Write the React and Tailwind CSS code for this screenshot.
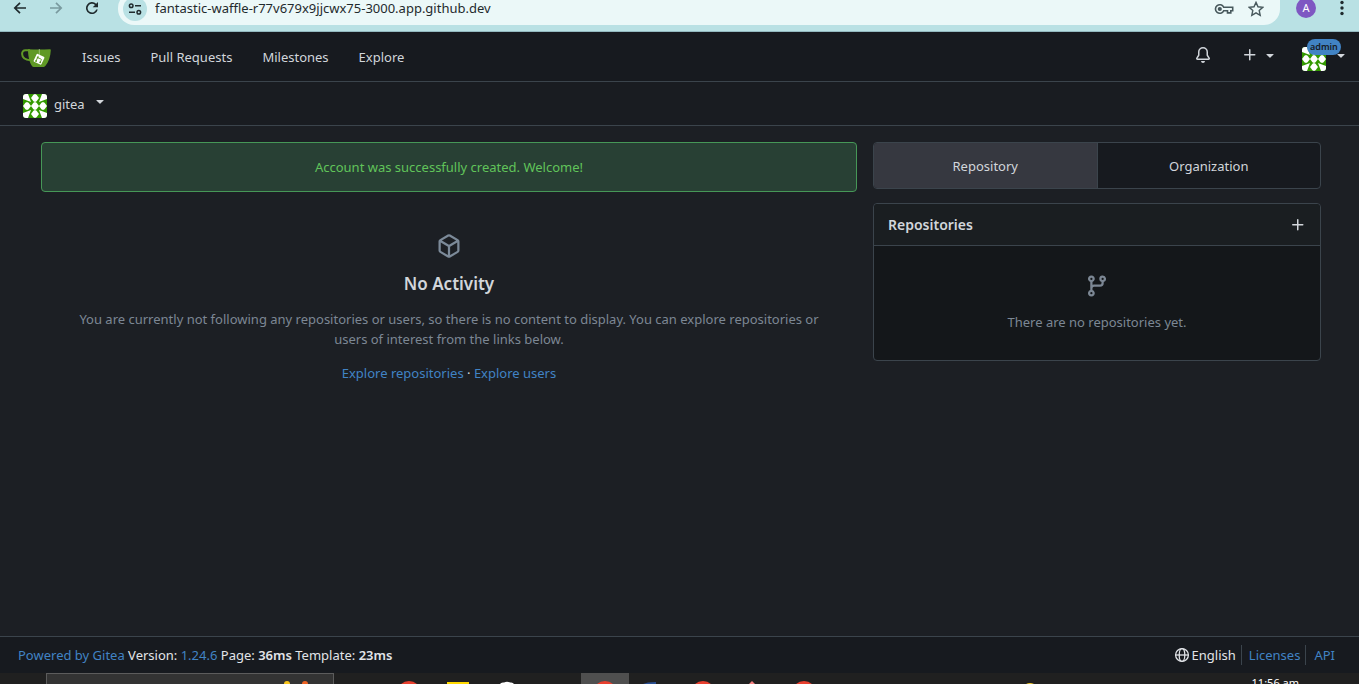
const paths = {
  plus: "M7.75 2a.75.75 0 0 1 .75.75V7h4.25a.75.75 0 0 1 0 1.5H8.5v4.25a.75.75 0 0 1-1.5 0V8.5H2.75a.75.75 0 0 1 0-1.5H7V2.75A.75.75 0 0 1 7.75 2Z",
  caret: "m4.427 7.427 3.396 3.396a.25.25 0 0 0 .354 0l3.396-3.396A.25.25 0 0 0 11.396 7H4.604a.25.25 0 0 0-.177.427Z",
  bell: "M8 16a2 2 0 0 0 1.985-1.75c.017-.137-.097-.25-.235-.25h-3.5c-.138 0-.252.113-.235.25A2 2 0 0 0 8 16ZM3 5a5 5 0 0 1 10 0v2.947c0 .05.015.098.042.139l1.703 2.555A1.519 1.519 0 0 1 13.482 13H2.518a1.516 1.516 0 0 1-1.263-2.36l1.703-2.554A.255.255 0 0 0 3 7.947Zm5-3.5A3.5 3.5 0 0 0 4.5 5v2.947c0 .346-.102.683-.294.97l-1.703 2.556a.017.017 0 0 0-.003.01l.001.006c0 .002.002.004.004.006l.006.004.007.001h10.964l.007-.001.006-.004.004-.006.001-.007a.017.017 0 0 0-.003-.01l-1.703-2.554a1.745 1.745 0 0 1-.294-.97V5A3.5 3.5 0 0 0 8 1.5Z",
  pkg: "m8.878.392 5.25 3.045c.54.314.872.89.872 1.514v6.098a1.75 1.75 0 0 1-.872 1.514l-5.25 3.045a1.75 1.75 0 0 1-1.756 0l-5.25-3.045A1.75 1.75 0 0 1 1 11.049V4.951c0-.624.332-1.201.872-1.514L7.122.392a1.75 1.75 0 0 1 1.756 0ZM7.875 1.69l-4.63 2.685L8 7.133l4.755-2.758-4.63-2.685a.248.248 0 0 0-.25 0ZM2.5 5.677v5.372c0 .09.047.171.125.216l4.625 2.683V8.432Zm6.25 8.271 4.625-2.683a.25.25 0 0 0 .125-.216V5.677L8.75 8.432Z",
  branch: "M9.5 3.25a2.25 2.25 0 1 1 3 2.122V6A2.5 2.5 0 0 1 10 8.5H6a1 1 0 0 0-1 1v1.128a2.251 2.251 0 1 1-1.5 0V5.372a2.25 2.25 0 1 1 1.5 0v1.836A2.493 2.493 0 0 1 6 7h4a1 1 0 0 0 1-1v-.628A2.25 2.25 0 0 1 9.5 3.25Zm-6 0a.75.75 0 1 0 1.5 0 .75.75 0 0 0-1.5 0Zm8.25-.75a.75.75 0 1 0 0 1.5.75.75 0 0 0 0-1.5ZM4.25 12a.75.75 0 1 0 0 1.5.75.75 0 0 0 0-1.5Z",
  reload: "M12.2 3.8A6 6 0 1 0 13.8 9.6h-1.6A4.4 4.4 0 1 1 11 4.9L8.7 7.2H14V2Z",
};

function Icon({ name, className = "size-4" }) {
  return (
    <svg viewBox="0 0 16 16" fill="currentColor" aria-hidden="true" className={`shrink-0 ${className}`}>
      <path d={paths[name]} />
    </svg>
  );
}

function Arrow({ className = "" }) {
  return (
    <svg viewBox="0 0 16 16" fill="none" stroke="currentColor" strokeWidth="1.7" aria-hidden="true" className={`size-4 ${className}`}>
      <path d="M14 8H3M8 2.8 2.8 8 8 13.2" />
    </svg>
  );
}

function Globe() {
  return (
    <svg viewBox="0 0 16 16" fill="none" stroke="currentColor" strokeWidth="1.3" aria-hidden="true" className="size-4">
      <circle cx="8" cy="8" r="6.4" />
      <ellipse cx="8" cy="8" rx="2.8" ry="6.4" />
      <path d="M1.6 8h12.8" />
    </svg>
  );
}

function Identicon() {
  const centers = [[4, 12], [12, 4], [12, 12], [20, 12], [12, 20]];
  return (
    <svg viewBox="0 0 24 24" role="img" aria-label="Avatar" className="size-6 rounded-[3px]">
      <path fill="#339900" d="M0 0h24v24H0z" />
      <g fill="#ffffff">
        {centers.map(([x, y]) => (
          <path key={`${x}-${y}`} d={`M${x - 4} ${y}l2.400-3.200 1.600-.8 1.600.8L${x + 4} ${y}l-2.400 3.200-1.600.8-1.600-.8z`} />
        ))}
        <path d="M0 0h5l3 8-8-3zM24 0h-5l-3 8 8-3zM0 24h5l3-8-8 3zM24 24h-5l-3-8 8 3z" />
      </g>
    </svg>
  );
}

function Logo() {
  return (
    <svg viewBox="0 0 30 20" role="img" aria-label="Gitea" className="h-5 w-[30px]">
      <path fill="none" stroke="#609926" strokeWidth="2" d="M9 2.2H4.5C2.2 2.2 1 3.8 1.1 6c.2 4 3.200 6 8.400 6.200" />
      <path fill="#609926" d="M7 1.200c7.500.500 15 .400 21.800 0 .7 0 1 .4 1 1-.2 6-2.300 11.800-5.300 15.600-.7.900-1.500 1.300-2.600 1.300h-8.400c-1.200 0-2-.4-2.700-1.400C8.300 14 7 7.500 7 1.200Z" />
      <path fill="none" stroke="#b6d69a" strokeWidth=".7" d="M18.300 1v6" />
      <rect x="13.700" y="7" width="8.600" height="8.600" rx="1" fill="#fff" transform="rotate(25 18 11.300)" />
      <g fill="none" stroke="#609926" strokeWidth=".9">
        <path d="m17.300 7.900-2.500 5.600M16.700 9.600l3.200 1.400c.7.400.5.800.2 1.400l-.8 1.800" />
      </g>
      <g fill="#609926">
        <circle cx="16.700" cy="9.600" r=".9" />
        <circle cx="15.100" cy="13" r=".9" />
        <circle cx="19.200" cy="14.300" r=".9" />
      </g>
    </svg>
  );
}

function BrowserBar() {
  return (
    <div className="flex h-8 items-start overflow-hidden border-b border-[#94b9c0] bg-[#b9e1e4] text-[#1f2a2d]">
      <div className="flex shrink-0 gap-5 pl-3">
        <button aria-label="Back"><Arrow /></button>
        <button aria-label="Forward" className="text-[#7a9a9f]"><Arrow className="rotate-180" /></button>
        <button aria-label="Reload"><Icon name="reload" /></button>
      </div>
      <div className="-mt-2 ml-[18px] flex h-[33px] min-w-0 flex-1 items-center rounded-b-2xl rounded-l-2xl bg-[#ebf8f8] pl-[5px] pr-4">
        <button aria-label="View site information" className="flex size-6 shrink-0 items-center justify-center rounded-full bg-[#b9e1e4]">
          <svg viewBox="0 0 16 16" fill="none" stroke="currentColor" strokeWidth="1.500" className="size-4">
            <circle cx="4.200" cy="4.700" r="1.800" />
            <circle cx="11.800" cy="11.300" r="1.800" />
            <path d="M8 4.700h6M2 11.300h6" />
          </svg>
        </button>
        <input
          aria-label="Address"
          readOnly
          value="fantastic-waffle-r77v679x9jjcwx75-3000.app.github.dev"
          className="ml-2 min-w-0 flex-1 bg-transparent text-[13px] outline-none"
        />
        <div className="flex items-center gap-3.5 text-[#47585c]">
          <button aria-label="Saved passwords">
            <svg viewBox="0 0 20 16" fill="none" stroke="currentColor" strokeWidth="1.600" className="h-4 w-5">
              <path d="M9.700 6.300A4.300 4.300 0 1 0 9.700 9.700h3.800v2.200h3.300V9.700H18.700V6.300Z" />
              <circle cx="5.800" cy="8" r="1.300" fill="currentColor" />
            </svg>
          </button>
          <button aria-label="Bookmark this page">
            <svg viewBox="0 0 16 16" fill="none" stroke="currentColor" strokeWidth="1.400" className="size-4">
              <path d="m8 1.400 2 4.400 4.800.5-3.600 3.200 1 4.800L8 11.900l-4.200 2.400 1-4.800L1.200 6.300 6 5.800Z" />
            </svg>
          </button>
        </div>
      </div>
      <div className="flex shrink-0 items-start gap-[18px] pl-4 pr-[9px]">
        <button aria-label="Profile" className="-mt-0.5 flex size-5 items-center justify-center rounded-full bg-[#7e57c2] text-[11px] text-white">A</button>
        <button aria-label="Browser menu">
          <svg viewBox="0 0 16 16" fill="currentColor" className="size-4">
            <circle cx="8" cy="2.500" r="1.700" /><circle cx="8" cy="8" r="1.700" /><circle cx="8" cy="13.500" r="1.700" />
          </svg>
        </button>
      </div>
    </div>
  );
}

function TopNav() {
  return (
    <nav className="flex h-[50px] items-center border-b border-[#3b444c] bg-[#171a1f] pl-[21px] pr-2.5">
      <a href="#home" aria-label="Home" className="mt-0.5"><Logo /></a>
      <div className="mt-0.5 ml-[31px] flex gap-[30px]">
        <a href="#issues">Issues</a>
        <a href="#pulls">Pull Requests</a>
        <a href="#milestones">Milestones</a>
        <a href="#explore">Explore</a>
      </div>
      <div className="ml-auto flex items-center">
        <button aria-label="Notifications" className="-mt-1"><Icon name="bell" /></button>
        <button aria-label="Create" className="-mt-1 ml-[31px] flex items-center gap-1">
          <Icon name="plus" />
          <Icon name="caret" />
        </button>
        <button aria-label="User menu" className="ml-6 flex items-center gap-[7px]">
          <span className="relative mt-1">
            <Identicon />
            <span className="absolute -top-2 left-[5px] rounded-full bg-[#4183c4] px-[3px] text-[9px] leading-4 font-semibold text-[#171a1f]">admin</span>
          </span>
          <Icon name="caret" className="-mt-1 size-4 -mr-0" />
        </button>
      </div>
    </nav>
  );
}

function Activity() {
  return (
    <section className="min-w-0 flex-[816]">
      <div role="status" className="rounded border border-[#469757] bg-[#284034] px-4 py-3.5 text-center leading-5 text-[#61c45a]">
        Account was successfully created. Welcome!
      </div>
      <div className="flex flex-col items-center px-7 pt-[42px] text-center leading-5">
        <Icon name="pkg" className="size-6 text-[#7c8a99]" />
        <h2 className="mt-3.5 text-[17px] leading-6 font-semibold text-[#d2d6db]">No Activity</h2>
        <p className="mt-[13px] text-[#7c8794]">
          You are currently not following any repositories or users, so there is no content to display. You can explore repositories or users of interest from the links below.
        </p>
        <p className="mt-3.5">
          <a href="#repos" className="text-[#4183c4]">Explore repositories</a> · <a href="#users" className="text-[#4183c4]">Explore users</a>
        </p>
      </div>
    </section>
  );
}

function Sidebar() {
  return (
    <aside className="min-w-0 flex-[448]">
      <div className="flex overflow-hidden rounded border border-[#3b444c] bg-[#171a1f]">
        <button className="flex-1 border-r border-[#3b444c] bg-[#363840] pt-[13px] pb-3 leading-5">Repository</button>
        <button className="flex-1 pt-[13px] pb-3 leading-5">Organization</button>
      </div>
      <div className="mt-3.5 rounded border border-[#3b444c] bg-[#14171a]">
        <div className="flex items-center justify-between rounded-t border-b border-[#3b444c] bg-[#1a1e21] px-3.5 py-2.5">
          <h3 className="text-[14px] leading-[21px] font-semibold">Repositories</h3>
          <button aria-label="New repository"><Icon name="plus" /></button>
        </div>
        <div className="flex flex-col items-center pt-7 pb-7 text-[#7c8794]">
          <Icon name="branch" className="size-6" />
          <p className="mt-3.5 leading-5">There are no repositories yet.</p>
        </div>
      </div>
    </aside>
  );
}

function Footer() {
  return (
    <footer className="flex h-[37px] items-center justify-between border-t border-[#3b444c] bg-[#171a1f] pl-[18px] pr-4 text-[#e2e4e8]">
      <div className="pt-0.5">
        <a href="#gitea" className="text-[#4183c4]">Powered by Gitea</a> Version: <a href="#version" className="text-[#4183c4]">1.24.6</a> Page: <strong className="font-semibold">36ms</strong> Template: <strong className="font-semibold">23ms</strong>
      </div>
      <div className="flex items-center leading-5">
        <button className="flex items-center gap-0.5 border-r border-[#3b444c] pr-[5px]"><Globe />English</button>
        <a href="#licenses" className="border-r border-[#3b444c] pr-[5px] pl-[7px] text-[#4183c4]">Licenses</a>
        <a href="#api" className="px-2 text-[#4183c4]">API</a>
      </div>
    </footer>
  );
}

function Taskbar() {
  return (
    <div className="flex h-[11px] items-start overflow-hidden bg-[#202020]">
      <div className="ml-[46px] flex h-4 w-72 shrink-0 gap-3 border border-[#5c5c5c] bg-[#333333] pl-[237px] pt-[7px]">
        <span className="size-1.5 shrink-0 rounded-full bg-[#f9c51a]" />
        <span className="size-1.5 shrink-0 rounded-full bg-[#ef6425]" />
      </div>
      <svg viewBox="0 0 490 11" aria-hidden="true" className="h-[11px] w-[490px] shrink-0">
        <path fill="#4f4f4f" d="M247 0h48v11h-48z" />
        <g fill="#e8402f">
          <circle cx="75" cy="20" r="12" /><circle cx="271" cy="20" r="12" /><circle cx="369" cy="20" r="12" /><circle cx="470" cy="20" r="12" />
        </g>
        <path fill="#ffd900" d="M113 9h22v2h-22z" />
        <path fill="#fff" d="M166 11q1-2 4-1.500 3-1.500 6 0 3-.5 4 1.500z" />
        <path fill="#2a4f93" d="M309 11l5-1.500 8-.5v2z" />
        <path fill="#f48080" d="M415 11l3-3 3 3z" />
      </svg>
      <svg viewBox="0 0 20 11" aria-hidden="true" className="ml-auto h-[11px] w-5 shrink-0">
        <path fill="#f2cb2f" d="M6 11q4-2 8 0z" />
      </svg>
      <time className="ml-[212px] mr-[60px] pt-0.5 text-[11px] leading-4 text-white">11:56 am</time>
    </div>
  );
}

export default function App() {
  return (
    <div className="flex min-h-screen flex-col bg-[#1c1f24] font-['Noto_Sans',sans-serif] text-[13px] text-[#d2d6db]">
      <BrowserBar />
      <TopNav />
      <div className="flex h-11 items-center border-b border-[#3b444c] bg-[#191c21] pl-[23px]">
        <button className="flex items-center">
          <span className="mt-1"><Identicon /></span>
          <span className="mt-0.5 ml-[7px]">gitea</span>
          <Icon name="caret" className="-mt-1.5 ml-[7px] size-4" />
        </button>
      </div>
      <main className="flex flex-1 items-start gap-4 pt-4 pr-[38px] pl-[41px]">
        <Activity />
        <Sidebar />
      </main>
      <Footer />
      <Taskbar />
    </div>
  );
}
